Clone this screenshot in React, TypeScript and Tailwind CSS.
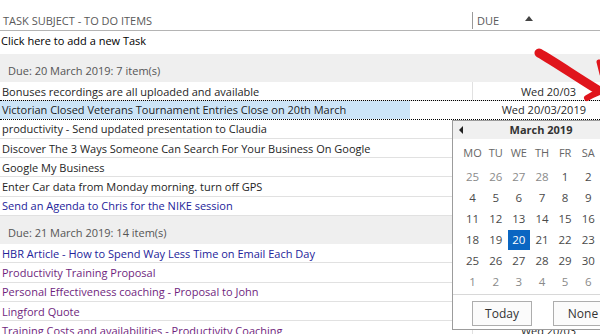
const font = { fontFamily: '"Open Sans", "Noto Sans", sans-serif' };

type Task = { title: string; color?: string; due?: string };

const group1: Task[] = [
    {title: "Bonuses recordings are all uploaded and available", due: "Wed 20/03"},
    {title: "Victorian Closed Veterans Tournament Entries Close on 20th March", due: "Wed 20/03/2019"},
    {title: "productivity - Send updated presentation to Claudia"},
    {title: "Discover The 3 Ways Someone Can Search For Your Business On Google"},
    {title: "Google My Business"},
    {title: "Enter Car data from Monday morning. turn off GPS"},
    {title: "Send an Agenda to Chris for the NIKE session", color: "text-[#23239a]"},
];

const group2: Task[] = [
    {title: "HBR Article - How to Spend Way Less Time on Email Each Day", color: "text-[#23239a]"},
    {title: "Productivity Training Proposal", color: "text-[#701f7e]"},
    {title: "Personal Effectiveness coaching - Proposal to John", color: "text-[#701f7e]"},
    {title: "Lingford Quote", color: "text-[#701f7e]"},
    {title: "Training Costs and availabilities - Productivity Coaching", color: "text-[#701f7e]", due: "Wed 20/03"},
];

const weeks: { d: number; other?: boolean }[][] = [
    [{d: 25, other: true}, {d: 26, other: true}, {d: 27, other: true}, {d: 28, other: true}, {d: 1}, {d: 2}, {d: 3}],
    [{d: 4}, {d: 5}, {d: 6}, {d: 7}, {d: 8}, {d: 9}, {d: 10}],
    [{d: 11}, {d: 12}, {d: 13}, {d: 14}, {d: 15}, {d: 16}, {d: 17}],
    [{d: 18}, {d: 19}, {d: 20}, {d: 21}, {d: 22}, {d: 23}, {d: 24}],
    [{d: 25}, {d: 26}, {d: 27}, {d: 28}, {d: 29}, {d: 30}, {d: 31}],
    [{d: 1, other: true}, {d: 2, other: true}, {d: 3, other: true}, {d: 4, other: true}, {d: 5, other: true}, {d: 6, other: true}, {d: 7, other: true}],
];

function TaskRow({task}: { task: Task }) {
    return (
        <div className="flex h-[19.3px] border-b border-[#e1e1e1] text-[11px] leading-none">
            <div className={`w-[472px] flex items-center pl-[2px] whitespace-nowrap overflow-hidden ${task.color ?? "text-[#1e1e1e]"}`}>
                {task.title}
            </div>
            <div className="flex-1 flex items-center justify-end pr-[24px] border-l border-[#e1e1e1] text-[#2a2a2a]">
                {task.due}
            </div>
        </div>
    );
}

function GroupHeader({label}: { label: string }) {
    return (
        <div className="h-[28px] bg-[#efefef] flex items-end pb-[6px] pl-[8px] text-[11px] leading-none text-[#555]">
            {label}
        </div>
    );
}

function Calendar() {
    return (
        <div className="absolute left-[452px] top-[120px] w-[180px] h-[210px] bg-white border border-[#9c9c9c]">
            <div className="h-[18px] bg-[#f0f0f0] relative flex items-center justify-center pr-[2px] font-bold text-[11px] text-[#333]">
                <span className="absolute left-[6px] top-[5px] w-0 h-0 border-y-[4px] border-y-transparent border-r-[4px] border-r-[#222]"/>
                <span>March 2019</span>
            </div>
            <div className="px-[8px]">
                <div className="grid grid-cols-7 h-[22px] items-center mt-[3px] text-[#666] text-[11px]">
                    {["MO", "TU", "WE", "TH", "FR", "SA", "SU"].map((d) => (
                        <div key={d} className="text-center">{d}</div>
                    ))}
                </div>
                <div className="mt-[2px] mb-[2px]">
                    {weeks.map((w, i) => (
                        <div key={i} className="grid grid-cols-7 h-[21px]">
                            {w.map((c, j) => {
                                const sel = i === 3 && c.d === 20;
                                return (
                                    <div key={j} className="flex items-center justify-center">
                                        <span className={`w-[22px] h-[20px] flex items-center justify-center text-[11.5px] ${sel ? "bg-[#0a66c2] text-white" : c.other ? "text-[#8a8a8a]" : "text-[#4a4a4a]"}`}>
                                            {c.d}
                                        </span>
                                    </div>
                                );
                            })}
                        </div>
                    ))}
                </div>
            </div>
            <div className="border-t border-[#d8d8d8] flex gap-[21px] pl-[19px] pt-[6px]">
                <button className="w-[60px] h-[25px] border border-[#adadad] bg-[#fbfbfb] text-[12px] text-[#333]">Today</button>
                <button className="w-[60px] h-[25px] border border-[#adadad] bg-[#fbfbfb] text-[12px] text-[#333]">None</button>
            </div>
        </div>
    );
}

export default function App() {
    return (
        <div className="relative w-[600px] h-[334px] overflow-hidden bg-white" style={font}>
            {/* column header */}
            <div className="flex h-[31px] border-b border-[#b4b4b4] text-[11px] leading-[16px] text-[#595959]">
                <div className="w-[472px] flex items-end pb-[1px] pl-[3px]">TASK SUBJECT - TO DO ITEMS</div>
                <div className="flex-1 flex items-end pb-[1px]">
                    <div className="border-l border-[#9a9a9a] h-[17px] pl-[4px] flex items-center gap-[26px]">
                        <span>DUE</span>
                        <span className="w-0 h-0 border-x-[4px] border-x-transparent border-b-[5px] border-b-[#444] mb-[4px]"/>
                    </div>
                </div>
            </div>

            <div className="h-[23px] pl-[1px] pt-[2px] text-[11px] leading-[16px] text-black">
                Click here to add a new Task
            </div>

            <GroupHeader label="Due: 20 March 2019: 7 item(s)"/>
            {group1.map((t, i) =>
                i === 1 ? (
                    <div key={i} className="flex h-[19.3px] border-y border-dotted border-black -mt-[1px] text-[11px] leading-none">
                        <div className="w-[410px] bg-[#cce4f7] flex items-center pl-[2px] whitespace-nowrap text-[#1e1e1e]">{t.title}</div>
                        <div className="flex-1 flex items-center justify-end pr-[14px] text-[#2a2a2a]">{t.due}</div>
                    </div>
                ) : (
                    <TaskRow key={i} task={t}/>
                )
            )}

            <GroupHeader label="Due: 21 March 2019: 14 item(s)"/>
            {group2.map((t, i) => (
                <TaskRow key={i} task={t}/>
            ))}

            <Calendar/>

            {/* hand-drawn red arrow */}
            <svg className="absolute left-[520px] top-[40px]" width="80" height="70" viewBox="0 0 80 70">
                <path d="M19 13 C 35 22, 55 36, 78 50" stroke="#e0151c" strokeWidth="9" strokeLinecap="round" fill="none"/>
                <path d="M67 58 C 72 55, 76 53, 82 51" stroke="#e0151c" strokeWidth="6" strokeLinecap="round" fill="none"/>
                <path d="M79 22 L 82 34" stroke="#e0151c" strokeWidth="5" strokeLinecap="round" fill="none"/>
            </svg>
        </div>
    );
}
